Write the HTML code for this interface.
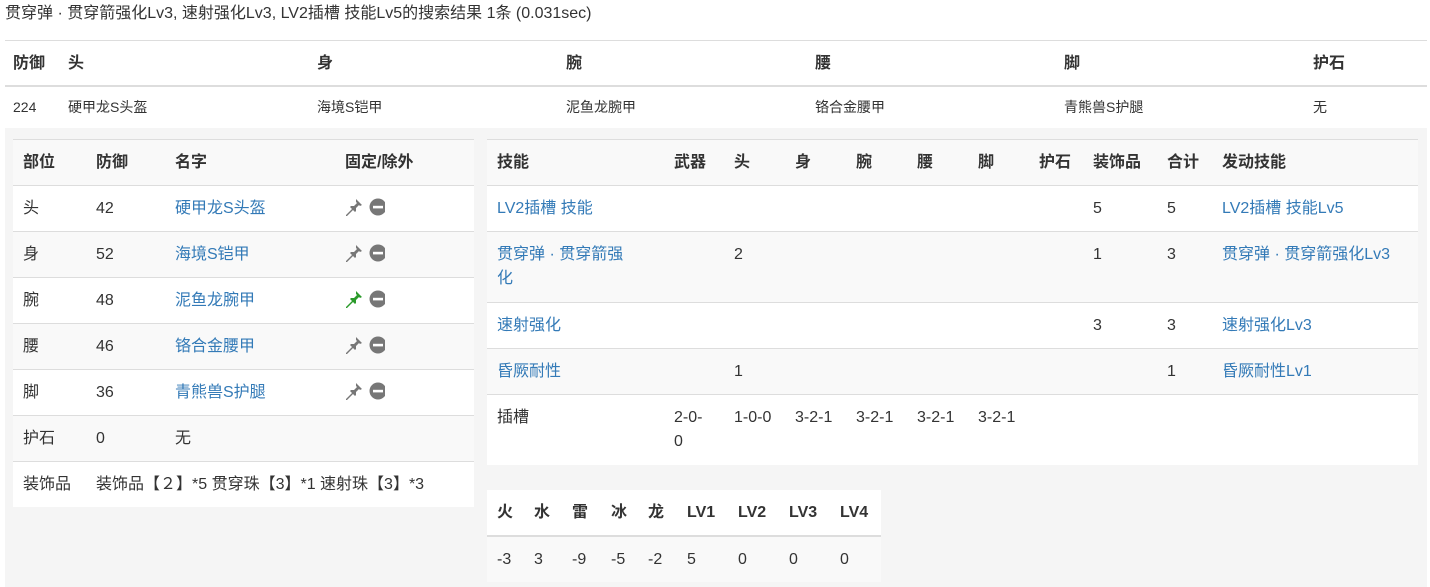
<!DOCTYPE html>
<html><head><meta charset="utf-8"><style>
*{box-sizing:border-box;margin:0;padding:0}
body{width:1430px;height:587px;overflow:hidden;background:#fff;font-family:"Liberation Sans","Noto Sans CJK SC",sans-serif;color:#333;font-size:16px;position:relative}
.title{position:absolute;left:5px;top:3px;font-size:16px;line-height:22px}
table{border-collapse:collapse;table-layout:fixed;position:absolute;background:#fff}
td,th{text-align:left;vertical-align:top;padding:11px 10px 11px;line-height:23px;border-top:1px solid #ddd;white-space:nowrap}
th{font-weight:bold}
.s{background:#f9f9f9}
a{color:#337ab7;text-decoration:none}
.top{left:5px;top:40px;width:1422px}
.top th{padding:11px 8px 10px;border-bottom:2px solid #ddd}
.top td{font-size:14px;line-height:20px;padding:10px 8px 11px}
.well{position:absolute;left:5px;top:128px;width:1422px;height:459px;background:#f5f5f5}
.ic{display:inline-block;vertical-align:middle;margin-top:-3px}
.w td{line-height:24px}
</style></head><body>
<div class="title">贯穿弹 · 贯穿箭强化Lv3, 速射强化Lv3, LV2插槽 技能Lv5的搜索结果 1条 (0.031sec)</div>
<table class="top">
<colgroup><col style="width:55px"><col style="width:249px"><col style="width:249px"><col style="width:249px"><col style="width:249px"><col style="width:249px"><col style="width:122px"></colgroup>
<tr><th>防御</th><th>头</th><th>身</th><th>腕</th><th>腰</th><th>脚</th><th>护石</th></tr>
<tr><td>224</td><td>硬甲龙S头盔</td><td>海境S铠甲</td><td>泥鱼龙腕甲</td><td>铬合金腰甲</td><td>青熊兽S护腿</td><td>无</td></tr>
</table>
<div class="well"></div>
<table style="left:13px;top:139px;width:461px">
<colgroup><col style="width:73px"><col style="width:79px"><col style="width:170px"><col style="width:139px"></colgroup>
<tr class="s"><th>部位</th><th>防御</th><th>名字</th><th>固定/除外</th></tr>
<tr><td>头</td><td>42</td><td><a>硬甲龙S头盔</a></td><td><svg class="ic" width="40" height="18" viewBox="0 0 40 18"><g fill="#777"><path d="M11 1l6 6-2 1-1-1-3 3 0 3-1 1-2-2-6 6-1 0 0-1 6-6-2-2 1-1 3 0 3-3-1-1z"/><circle cx="33" cy="9" r="8.5"/></g><rect x="28" y="7.8" width="10" height="2.6" fill="#fff"/></svg></td></tr>
<tr class="s"><td>身</td><td>52</td><td><a>海境S铠甲</a></td><td><svg class="ic" width="40" height="18" viewBox="0 0 40 18"><g fill="#777"><path d="M11 1l6 6-2 1-1-1-3 3 0 3-1 1-2-2-6 6-1 0 0-1 6-6-2-2 1-1 3 0 3-3-1-1z"/><circle cx="33" cy="9" r="8.5"/></g><rect x="28" y="7.8" width="10" height="2.6" fill="#fff"/></svg></td></tr>
<tr><td>腕</td><td>48</td><td><a>泥鱼龙腕甲</a></td><td><svg class="ic" width="40" height="18" viewBox="0 0 40 18"><path fill="#2a9a2a" d="M11 1l6 6-2 1-1-1-3 3 0 3-1 1-2-2-6 6-1 0 0-1 6-6-2-2 1-1 3 0 3-3-1-1z"/><circle fill="#777" cx="33" cy="9" r="8.5"/><rect x="28" y="7.8" width="10" height="2.6" fill="#fff"/></svg></td></tr>
<tr class="s"><td>腰</td><td>46</td><td><a>铬合金腰甲</a></td><td><svg class="ic" width="40" height="18" viewBox="0 0 40 18"><g fill="#777"><path d="M11 1l6 6-2 1-1-1-3 3 0 3-1 1-2-2-6 6-1 0 0-1 6-6-2-2 1-1 3 0 3-3-1-1z"/><circle cx="33" cy="9" r="8.5"/></g><rect x="28" y="7.8" width="10" height="2.6" fill="#fff"/></svg></td></tr>
<tr><td>脚</td><td>36</td><td><a>青熊兽S护腿</a></td><td><svg class="ic" width="40" height="18" viewBox="0 0 40 18"><g fill="#777"><path d="M11 1l6 6-2 1-1-1-3 3 0 3-1 1-2-2-6 6-1 0 0-1 6-6-2-2 1-1 3 0 3-3-1-1z"/><circle cx="33" cy="9" r="8.5"/></g><rect x="28" y="7.8" width="10" height="2.6" fill="#fff"/></svg></td></tr>
<tr class="s"><td>护石</td><td>0</td><td>无</td><td></td></tr>
<tr><td>装饰品</td><td colspan="3">装饰品【２】*5 贯穿珠【3】*1 速射珠【3】*3</td></tr>
</table>
<table style="left:487px;top:139px;width:931px">
<colgroup><col style="width:177px"><col style="width:60px"><col style="width:61px"><col style="width:61px"><col style="width:61px"><col style="width:61px"><col style="width:61px"><col style="width:54px"><col style="width:74px"><col style="width:55px"><col style="width:206px"></colgroup>
<tr class="s"><th>技能</th><th>武器</th><th>头</th><th>身</th><th>腕</th><th>腰</th><th>脚</th><th>护石</th><th>装饰品</th><th>合计</th><th>发动技能</th></tr>
<tr><td><a>LV2插槽 技能</a></td><td></td><td></td><td></td><td></td><td></td><td></td><td></td><td>5</td><td>5</td><td><a>LV2插槽 技能Lv5</a></td></tr>
<tr class="s w"><td><a>贯穿弹 · 贯穿箭强<br>化</a></td><td></td><td>2</td><td></td><td></td><td></td><td></td><td></td><td>1</td><td>3</td><td><a>贯穿弹 · 贯穿箭强化Lv3</a></td></tr>
<tr><td><a>速射强化</a></td><td></td><td></td><td></td><td></td><td></td><td></td><td></td><td>3</td><td>3</td><td><a>速射强化Lv3</a></td></tr>
<tr class="s"><td><a>昏厥耐性</a></td><td></td><td>1</td><td></td><td></td><td></td><td></td><td></td><td></td><td>1</td><td><a>昏厥耐性Lv1</a></td></tr>
<tr class="w"><td>插槽</td><td>2-0-<br>0</td><td>1-0-0</td><td>3-2-1</td><td>3-2-1</td><td>3-2-1</td><td>3-2-1</td><td></td><td></td><td></td><td></td></tr>
</table>
<table style="left:487px;top:490px;width:394px">
<colgroup><col style="width:37px"><col style="width:38px"><col style="width:39px"><col style="width:37px"><col style="width:39px"><col style="width:51px"><col style="width:51px"><col style="width:51px"><col style="width:51px"></colgroup>
<tr><th style="border-top:0;border-bottom:2px solid #ddd">火</th><th style="border-top:0;border-bottom:2px solid #ddd">水</th><th style="border-top:0;border-bottom:2px solid #ddd">雷</th><th style="border-top:0;border-bottom:2px solid #ddd">冰</th><th style="border-top:0;border-bottom:2px solid #ddd">龙</th><th style="border-top:0;border-bottom:2px solid #ddd">LV1</th><th style="border-top:0;border-bottom:2px solid #ddd">LV2</th><th style="border-top:0;border-bottom:2px solid #ddd">LV3</th><th style="border-top:0;border-bottom:2px solid #ddd">LV4</th></tr>
<tr class="s"><td>-3</td><td>3</td><td>-9</td><td>-5</td><td>-2</td><td>5</td><td>0</td><td>0</td><td>0</td></tr>
</table>
</body></html>
